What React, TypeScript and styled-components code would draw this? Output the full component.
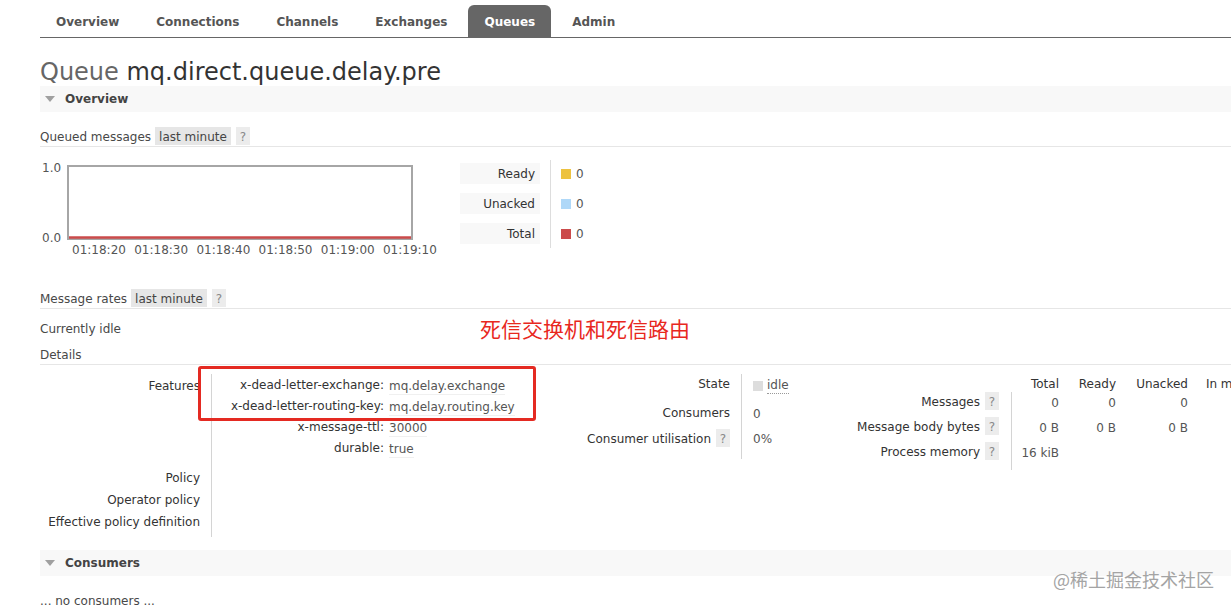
import React from "react";
import styled, { createGlobalStyle } from "styled-components";

const GlobalStyle = createGlobalStyle`
  html, body {
    margin: 0;
    padding: 0;
    background: #fff;
    overflow: hidden;
  }
  body {
    font-family: "DejaVu Sans", Verdana, "Noto Sans CJK SC", sans-serif;
    font-size: 12px;
    line-height: 14px;
    color: #484848;
  }
`;

const Page = styled.div`
  position: relative;
  width: 1300px;
  padding: 5px 0 0 40px;
`;

/* ---------- top navigation ---------- */
const Nav = styled.nav`
  display: flex;
  gap: 5px;
  border-bottom: 1px solid #666;
`;

const Tab = styled.a<{ $active?: boolean }>`
  display: block;
  height: 31px;
  padding: 1px 16px 0;
  line-height: 32px;
  overflow: hidden;
  border-radius: 6px 6px 0 0;
  font-weight: bold;
  text-decoration: none;
  color: ${(p) => (p.$active ? "#fff" : "#555")};
  background: ${(p) => (p.$active ? "#666" : "transparent")};
`;

/* ---------- heading ---------- */
const Title = styled.h1`
  margin: 20px 0 0;
  font-size: 24px;
  line-height: 28px;
  font-weight: normal;
  color: #666;
`;

const TitleName = styled.span`
  color: #333;
`;

const SectionHeader = styled.div<{ $mt?: number }>`
  display: flex;
  align-items: center;
  gap: 10px;
  height: 26px;
  margin-top: ${(p) => p.$mt ?? 0}px;
  padding-left: 5px;
  background: #f8f8f8;
  font-weight: bold;
  color: #444;
`;

const Caret = styled.span`
  width: 0;
  height: 0;
  border-left: 5px solid transparent;
  border-right: 5px solid transparent;
  border-top: 6px solid #a0a0a0;
`;

const SubHeading = styled.div<{ $mt: number }>`
  display: flex;
  align-items: flex-start;
  height: 19px;
  margin-top: ${(p) => p.$mt}px;
  border-bottom: 1px solid #e6e6e6;
  color: #484848;
`;

const LabelText = styled.span`
  height: 18px;
  line-height: 20px;
`;

const Chip = styled.span`
  height: 18px;
  line-height: 20px;
  overflow: hidden;
  margin-left: 4px;
  padding: 0 4px;
  background: #e6e6e6;
  color: #444;
`;

const Help = styled.span`
  display: inline-block;
  width: 14px;
  height: 18px;
  line-height: 20px;
  overflow: hidden;
  margin-left: 5px;
  text-align: center;
  background: #ececec;
  color: #888;
`;

/* ---------- queued messages chart ---------- */
const ChartRow = styled.div`
  display: flex;
  align-items: flex-start;
  gap: 20px;
  margin-top: 13px;
`;

const Chart = styled.div`
  display: grid;
  grid-template-columns: 27px 373px;
  grid-template-rows: 82px 14px;
  color: #555;
`;

const YAxis = styled.div`
  grid-row: 1 / 3;
  display: flex;
  flex-direction: column;
  gap: 56px;
  padding: 1px 0 0 2px;
`;

const Plot = styled.div`
  padding-top: 5px;
  line-height: 0;
`;

const XAxis = styled.div`
  grid-column: 2;
  display: grid;
  grid-template-columns: repeat(6, 62.2px);
  padding: 1px 0 0 5px;
`;

const Legend = styled.div`
  display: flex;
`;

const LegendLabels = styled.div`
  display: flex;
  flex-direction: column;
  gap: 9px;
  padding: 3px 10px 4px 0;
`;

const LegendLabel = styled.div`
  box-sizing: border-box;
  width: 80px;
  height: 21px;
  line-height: 23px;
  overflow: hidden;
  padding-right: 5px;
  text-align: right;
  background: #f8f8f8;
  color: #333;
`;

const LegendValues = styled.div`
  display: flex;
  flex-direction: column;
  gap: 9px;
  padding: 3px 0 4px 10px;
  border-left: 1px solid #ddd;
`;

const LegendValue = styled.div`
  display: flex;
  align-items: center;
  gap: 5px;
  height: 21px;
  color: #555;
`;

const Swatch = styled.span<{ $c: string }>`
  display: inline-block;
  flex: none;
  width: 10px;
  height: 10px;
  background: ${(p) => p.$c};
`;

const Paragraph = styled.p<{ $mt: number }>`
  margin: ${(p) => p.$mt}px 0 0;
  line-height: 14px;
`;

/* ---------- details ---------- */
const DetailsRow = styled.div`
  display: flex;
  align-items: flex-start;
  margin-top: 9px;
`;

const Facts = styled.div<{ $cols: string; $rows: string; $w: number }>`
  display: grid;
  width: ${(p) => p.$w}px;
  grid-template-columns: ${(p) => p.$cols};
  grid-template-rows: ${(p) => p.$rows};
`;

const FactLabel = styled.div<{ $lh?: number }>`
  display: flex;
  justify-content: flex-end;
  align-items: flex-start;
  padding: ${(p) => (p.$lh ? 1 : 3)}px 11px 0 0;
  line-height: ${(p) => p.$lh ?? 14}px;
  color: #333;
  white-space: nowrap;
`;

const FactValue = styled.div<{ $lh?: number }>`
  display: flex;
  align-items: flex-start;
  padding: ${(p) => (p.$lh ? 0 : 4)}px 11px 0;
  line-height: ${(p) => p.$lh ?? 14}px;
  border-left: 1px solid #d4d4d4;
  color: #555;
  white-space: nowrap;
`;

const ArgTable = styled.div`
  display: grid;
  grid-template-columns: 166px auto;
  grid-auto-rows: 21px;
  line-height: 21px;
`;

const ArgKey = styled.span`
  padding: 1px 5px 0 0;
  text-align: right;
  color: #333;
`;

const ArgValue = styled.span`
  justify-self: start;
  line-height: 18px;
  margin-top: 3px;
  border-bottom: 1px solid #f0f0f0;
  color: #555;
`;

const StateText = styled.span`
  border-bottom: 1px dotted #999;
  line-height: 15px;
`;

const StateRow = styled.span`
  display: flex;
  align-items: center;
  gap: 4px;
`;

const Stats = styled.div`
  display: grid;
  grid-template-columns: 191px 48px 57px 72px 83px;
  grid-template-rows: 18px 25px 25px 28px;
`;

const StatHead = styled.div`
  padding-top: 3px;
  text-align: right;
  color: #333;
  white-space: nowrap;
`;

const StatLabel = styled.div`
  display: flex;
  justify-content: flex-end;
  align-items: flex-start;
  padding-right: 12px;
  color: #333;
  white-space: nowrap;
`;

const StatValue = styled.div<{ $first?: boolean }>`
  text-align: right;
  line-height: 18px;
  padding-top: 2px;
  border-left: ${(p) => (p.$first ? "1px solid #d4d4d4" : "none")};
  color: #555;
  white-space: nowrap;
`;

/* ---------- overlays ---------- */
const Callout = styled.div`
  position: absolute;
  left: 198px;
  top: 366px;
  width: 338px;
  height: 55px;
  box-sizing: border-box;
  border: 3px solid #e42a22;
  border-radius: 3px;
  pointer-events: none;
`;

const CalloutNote = styled.div`
  position: absolute;
  left: 480px;
  top: 315px;
  font-family: "Noto Sans CJK SC", sans-serif;
  font-size: 21px;
  line-height: 26px;
  color: #e8281e;
`;

const Watermark = styled.div`
  position: absolute;
  left: 1053px;
  top: 567px;
  font-family: "Noto Sans CJK SC", sans-serif;
  font-size: 18px;
  line-height: 24px;
  color: #a4a4a4;
`;

const tabs = ["Overview", "Connections", "Channels", "Exchanges", "Queues", "Admin"];
const times = ["01:18:20", "01:18:30", "01:18:40", "01:18:50", "01:19:00", "01:19:10"];
const legend = [
  { label: "Ready", color: "#edc240" },
  { label: "Unacked", color: "#afd8f8" },
  { label: "Total", color: "#cb4b4b" },
];
const args = [
  ["x-dead-letter-exchange:", "mq.delay.exchange"],
  ["x-dead-letter-routing-key:", "mq.delay.routing.key"],
  ["x-message-ttl:", "30000"],
  ["durable:", "true"],
];

const PlotFrame = () => (
  <svg width="346" height="75" viewBox="0 0 346 75">
    <rect x="1" y="1" width="344" height="73" fill="#fff" stroke="#a6a6a6" strokeWidth="2" />
    <line x1="2" y1="72.5" x2="344" y2="72.5" stroke="#cb4b4b" strokeWidth="2.5" />
  </svg>
);

export default function App() {
  return (
    <>
      <GlobalStyle />
      <Page>
        <Nav>
          {tabs.map((t) => (
            <Tab key={t} $active={t === "Queues"}>
              {t}
            </Tab>
          ))}
        </Nav>

        <Title>
          Queue <TitleName>mq.direct.queue.delay.pre</TitleName>
        </Title>

        <SectionHeader>
          <Caret />
          Overview
        </SectionHeader>

        <SubHeading $mt={15}>
          <LabelText>Queued messages</LabelText>
          <Chip>last minute</Chip>
          <Help>?</Help>
        </SubHeading>

        <ChartRow>
          <Chart>
            <YAxis>
              <span>1.0</span>
              <span>0.0</span>
            </YAxis>
            <Plot>
              <PlotFrame />
            </Plot>
            <XAxis>
              {times.map((t) => (
                <span key={t}>{t}</span>
              ))}
            </XAxis>
          </Chart>
          <Legend>
            <LegendLabels>
              {legend.map((l) => (
                <LegendLabel key={l.label}>{l.label}</LegendLabel>
              ))}
            </LegendLabels>
            <LegendValues>
              {legend.map((l) => (
                <LegendValue key={l.label}>
                  <Swatch $c={l.color} />0
                </LegendValue>
              ))}
            </LegendValues>
          </Legend>
        </ChartRow>

        <SubHeading $mt={33}>
          <LabelText>Message rates</LabelText>
          <Chip>last minute</Chip>
          <Help>?</Help>
        </SubHeading>

        <Paragraph $mt={13}>Currently idle</Paragraph>

        <SubHeading $mt={9}>
          <LabelText>Details</LabelText>
        </SubHeading>

        <DetailsRow>
          <Facts $w={535} $cols="171px auto" $rows="92px 22px 22px 27px">
            <FactLabel $lh={22}>Features</FactLabel>
            <FactValue $lh={21}>
              <ArgTable>
                {args.map(([k, v]) => (
                  <React.Fragment key={k}>
                    <ArgKey>{k}</ArgKey>
                    <ArgValue>{v}</ArgValue>
                  </React.Fragment>
                ))}
              </ArgTable>
            </FactValue>
            <FactLabel $lh={22}>Policy</FactLabel>
            <FactValue $lh={22} />
            <FactLabel $lh={22}>Operator policy</FactLabel>
            <FactValue $lh={22} />
            <FactLabel $lh={22}>Effective policy definition</FactLabel>
            <FactValue $lh={22} />
          </Facts>

          <Facts $w={245} $cols="166px auto" $rows="29px 25px 31px">
            <FactLabel>State</FactLabel>
            <FactValue>
              <StateRow>
                <Swatch $c="#ddd" />
                <StateText>idle</StateText>
              </StateRow>
            </FactValue>
            <FactLabel>Consumers</FactLabel>
            <FactValue>0</FactValue>
            <FactLabel $lh={18}>
              <LabelText>Consumer utilisation</LabelText>
              <Help>?</Help>
            </FactLabel>
            <FactValue>0%</FactValue>
          </Facts>

          <Stats>
            <span />
            <StatHead>Total</StatHead>
            <StatHead>Ready</StatHead>
            <StatHead>Unacked</StatHead>
            <StatHead>In memory</StatHead>

            <StatLabel>
              <LabelText>Messages</LabelText>
              <Help>?</Help>
            </StatLabel>
            <StatValue $first>0</StatValue>
            <StatValue>0</StatValue>
            <StatValue>0</StatValue>
            <StatValue />

            <StatLabel>
              <LabelText>Message body bytes</LabelText>
              <Help>?</Help>
            </StatLabel>
            <StatValue $first>0 B</StatValue>
            <StatValue>0 B</StatValue>
            <StatValue>0 B</StatValue>
            <StatValue />

            <StatLabel>
              <LabelText>Process memory</LabelText>
              <Help>?</Help>
            </StatLabel>
            <StatValue $first>16 kiB</StatValue>
            <StatValue />
            <StatValue />
            <StatValue />
          </Stats>
        </DetailsRow>

        <SectionHeader $mt={13}>
          <Caret />
          Consumers
        </SectionHeader>

        <Paragraph $mt={18}>... no consumers ...</Paragraph>

        <Callout />
        <CalloutNote>死信交换机和死信路由</CalloutNote>
        <Watermark>@稀土掘金技术社区</Watermark>
      </Page>
    </>
  );
}
